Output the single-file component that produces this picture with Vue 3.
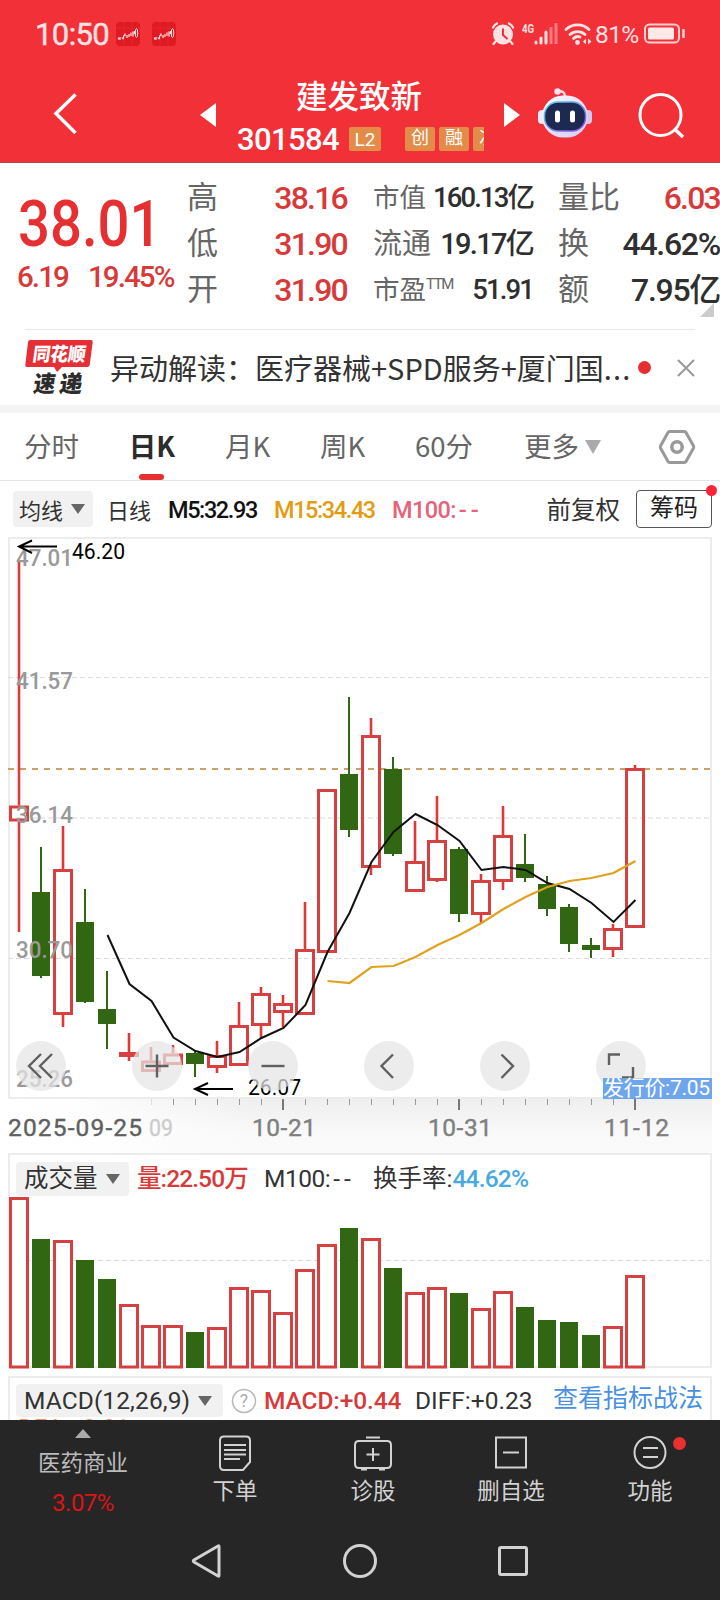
<template>
  <div class="page">
    <header class="head">
      <div class="status">
        <span class="clock">10:50</span>
        <svg v-for="n in 2" :key="n" class="app-ico" width="24" height="24" viewBox="0 0 24 24">
          <rect width="24" height="24" rx="4" fill="#e01a22" />
          <path d="M0 6h24M8 0v24M16 0v24" stroke="#e62e38" stroke-width=".6" />
          <path d="M2.500 15.500v2M4 15v3M6 15.500q1.500 3 1.500 0t1.500-2v-2M11 13v3M13 12v3M15 10.500v3.500M17 9.500v5M18.500 9v3" stroke="#ffe6e6" stroke-width="1.200" fill="none" />
          <ellipse cx="20.500" cy="11" rx="1.200" ry="4.500" stroke="#ffe6e6" fill="none" />
        </svg>
        <div class="status-right">
          <svg width="24" height="24" viewBox="0 0 24 24">
            <circle cx="12" cy="12.500" r="10" fill="#ffe3e4" />
            <path d="M2 5.500Q3 3 6 1.500M22 5.500Q21 3 18 1.500M4.500 19.500l-2 2.500M19.500 19.500l2 2.500" stroke="#ffe3e4" stroke-width="2.200" fill="none" stroke-linecap="round" />
            <path d="M12 6.500v6.500l4.500 4" stroke="#f23038" stroke-width="2" fill="none" />
          </svg>
          <svg class="signal" width="36" height="24" viewBox="0 0 36 24">
            <text x="0" y="10.500" textLength="12" lengthAdjust="spacingAndGlyphs" font-size="13.500" font-weight="700" fill="#ffe3e4">4G</text>
            <path d="M14 20v1M19 16v5M24 10v11" stroke="#ffe3e4" stroke-width="3" stroke-linecap="round" />
            <path d="M29 5v17M34 1v21" stroke="#f97a80" stroke-width="3" />
          </svg>
          <svg class="wifi" width="28" height="24" viewBox="0 0 28 24">
            <path d="M2 7.500a16.500 16.500 0 0 1 23 0M6 12.500a11 11 0 0 1 15 0M9.500 16.500a6 6 0 0 1 6.500-1.500" stroke="#ffe3e4" stroke-width="2.800" fill="none" stroke-linecap="round" />
            <circle cx="13.500" cy="20.500" r="2.400" fill="#ffe3e4" />
            <path d="M22 16.500v6l-3-3zM24 16.500v6l3.500-3z" fill="#ffe3e4" />
          </svg>
          <span class="percent">81%</span>
          <svg width="42" height="22" viewBox="0 0 42 22">
            <rect x="1" y="1.500" width="34" height="18" rx="4.500" fill="none" stroke="#ffd0d2" stroke-width="2" />
            <rect x="4" y="4.500" width="26" height="12" rx="1.500" fill="#ffe8e8" />
            <path d="M39.500 6v9" stroke="#ffd0d2" stroke-width="2.500" />
          </svg>
        </div>
      </div>
      <div class="title-bar">
        <svg class="back" width="24" height="42" viewBox="0 0 24 42">
          <path d="M22.500 1.500L3 20.500l19.500 19.500" fill="none" stroke="#fff" stroke-width="3.500" />
        </svg>
        <svg class="prev" width="16" height="24" viewBox="0 0 16 24"><path d="M16 0v24L0 12z" fill="#fff" /></svg>
        <div class="stock">
          <div class="name">建发致新</div>
          <div class="code-row">
            <span class="code">301584</span>
            <span class="tag l2">L2</span>
            <div class="tags">
              <span class="tag">创</span><span class="tag">融</span><span class="tag">次</span>
            </div>
          </div>
        </div>
        <svg class="next" width="16" height="24" viewBox="0 0 16 24"><path d="M0 0v24l16-12z" fill="#fff" /></svg>
        <svg class="robot" width="54" height="52" viewBox="0 0 54 52">
          <defs>
            <linearGradient id="shell" x1="0" y1="0" x2="1" y2="1">
              <stop offset="0" stop-color="#fff" /><stop offset=".6" stop-color="#e3dcf8" /><stop offset="1" stop-color="#d5cdf0" />
            </linearGradient>
            <linearGradient id="rim" x1="0" y1="0" x2="1" y2="1">
              <stop offset="0" stop-color="#50d8e8" /><stop offset="1" stop-color="#8b46e0" />
            </linearGradient>
          </defs>
          <path d="M20 4.500q7-1 7 5" fill="none" stroke="#ecd9ee" stroke-width="2.500" />
          <circle cx="19.500" cy="4.500" r="3.200" fill="#f6e4f2" />
          <rect x="0" y="23" width="8" height="14" rx="4" fill="#eceafa" />
          <rect x="46" y="23" width="8" height="14" rx="4" fill="#d3c8f3" />
          <rect x="4" y="8.500" width="46" height="42" rx="21" fill="url(#shell)" />
          <rect x="6.500" y="15" width="41" height="29" rx="13.500" fill="#1c2950" stroke="url(#rim)" stroke-width="1.500" />
          <rect x="17" y="23.500" width="5" height="12" rx="2.500" fill="#fff" />
          <rect x="32" y="23.500" width="5" height="12" rx="2.500" fill="#fff" />
        </svg>
        <svg class="search" width="46" height="46" viewBox="0 0 46 46">
          <circle cx="22.500" cy="22" r="20.500" fill="none" stroke="#fff" stroke-width="3" />
          <path d="M36 35.500l9 8.500" stroke="#fff" stroke-width="3.500" />
        </svg>
      </div>
    </header>

    <section class="quote">
      <div class="price">
        <div class="now">38.01</div>
        <div class="change"><span>6.19</span><span>19.45%</span></div>
      </div>
      <div v-for="(col, i) in quotes" :key="i" class="col" :class="'col' + i">
        <div v-for="q in col" :key="q.label" class="cell">
          <span class="label" :class="{ tight: q.tight }">{{ q.label }}<sup v-if="q.sup">{{ q.sup }}</sup></span>
          <span class="val" :class="{ up: q.up, small: q.tight }">{{ q.value }}</span>
        </div>
      </div>
      <i class="fold"></i>
    </section>

    <section class="notice">
      <svg width="68" height="58" viewBox="0 0 68 58">
        <path d="M5 1h61q2 0 1.700 2l-3 23q-.3 2-2.500 2H37l-5 5-3-5H2q-2 0-1.700-2L3 3q.3-2 2-2z" fill="#e62f35" />
        <g transform="skewX(-8)" font-weight="900">
          <text x="10" y="22" textLength="53" lengthAdjust="spacingAndGlyphs" font-size="19" fill="#fff">同花顺</text>
          <text x="15" y="53" textLength="22" lengthAdjust="spacingAndGlyphs" font-size="23" fill="#2c2c2c">速</text>
          <text x="41" y="53" textLength="23" lengthAdjust="spacingAndGlyphs" font-size="23" fill="#2c2c2c">递</text>
        </g>
      </svg>
      <span class="msg">异动解读：医疗器械+SPD服务+厦门国<span class="more">...</span></span>
      <i class="dot"></i>
      <svg class="close" width="18" height="18" viewBox="0 0 18 18"><path d="M1 1l16 16M17 1L1 17" stroke="#999" stroke-width="2" /></svg>
    </section>

    <nav class="tabs">
      <span v-for="t in tabs" :key="t" :class="{ on: t === '日K' }">{{ t }}</span>
      <i class="tri big"></i>
      <svg class="hex" width="38" height="36" viewBox="0 0 38 36">
        <path d="M11.500 2.500h15q1 0 1.500 1L35.500 17q.5 1 0 2L28 32.500q-.5 1-1.500 1h-15q-1 0-1.500-1L2.500 19q-.5-1 0-2L10 3.500q.5-1 1.500-1z" fill="none" stroke="#999" stroke-width="3" />
        <circle cx="19" cy="18" r="5.200" fill="none" stroke="#999" stroke-width="3.500" />
      </svg>
    </nav>

    <div class="ma-row">
      <span class="chip">均线<i class="tri"></i></span>
      <span class="period">日线</span>
      <span class="m5">M5:32.93</span>
      <span class="m15">M15:34.43</span>
      <span class="m100">M100:<span class="dash">--</span></span>
      <span class="fq">前复权</span>
      <span class="chouma">筹码</span>
    </div>

    <div class="kline">
      <svg width="720" height="617" viewBox="0 536 720 617">
        <defs>
          <linearGradient id="axisV" x1="0" y1="0" x2="0" y2="1">
            <stop offset="0" stop-color="#eeeeee" /><stop offset=".6" stop-color="#f9f9f9" /><stop offset="1" stop-color="#fafafa" />
          </linearGradient>
          <linearGradient id="axisH" x1="0" y1="0" x2="1" y2="0">
            <stop offset="0" stop-color="#fff" /><stop offset=".3" stop-color="#fff" stop-opacity=".9" /><stop offset="1" stop-color="#fff" stop-opacity="0" />
          </linearGradient>
        </defs>
        <rect x="9" y="538" width="702" height="560" fill="#fff" stroke="#ececec" stroke-width="2" />
        <path d="M8 677.500H710M8 958.500H710" stroke="#dcdcdc" stroke-dasharray="5 3" />
        <path d="M8 818H710" stroke="#ebebeb" stroke-width="2" stroke-dasharray="5 3" />
        <path d="M8 769H710" stroke="#c8a26b" stroke-width="2" stroke-dasharray="6 6" />
        <g v-for="(c, i) in candles" :key="i">
          <template v-if="c[0]">
            <path :d="`M${cx(i)} ${c[1]}V${c[2]}M${cx(i)} ${c[3]}V${c[4]}`" stroke="#de3838" stroke-width="2.600" />
            <rect :x="cx(i) - 8.5" :y="c[2] + 1.5" width="17" :height="c[3] - c[2] - 3" fill="none" stroke="#d64040" stroke-width="3" />
          </template>
          <template v-else>
            <path :d="`M${cx(i)} ${c[1]}V${c[4]}`" stroke="#316613" stroke-width="2" />
            <rect :x="cx(i) - 9" :y="c[2]" width="18" :height="c[3] - c[2]" fill="#316613" />
          </template>
        </g>
        <polyline :points="line(ma5, 4)" fill="none" stroke="#111" stroke-width="2" />
        <polyline :points="line(ma15, 14)" fill="none" stroke="#dea220" stroke-width="2.200" />
        <g font-size="24.500" font-weight="500" fill="#999">
          <text v-for="s in scale" :key="s[0]" x="16" :y="s[1]" textLength="57" lengthAdjust="spacingAndGlyphs">{{ s[0] }}</text>
        </g>
        <g fill="none" stroke="#000" stroke-width="2">
          <path d="M57 546.500H19M32 540.500L19 546.500L32 553" />
          <path d="M233 1089H195M208 1083L195 1089L208 1095" />
        </g>
        <g font-size="22" fill="#000">
          <text x="72" y="558.500" textLength="53" lengthAdjust="spacingAndGlyphs">46.20</text>
          <text x="248" y="1095" textLength="53" lengthAdjust="spacingAndGlyphs">26.07</text>
        </g>
        <!-- 日期轴 -->
        <rect x="8" y="1099" width="704" height="54" fill="url(#axisV)" />
        <rect x="8" y="1099" width="250" height="54" fill="url(#axisH)" />
        <path d="M151.500 1099v6" stroke="#ddd" />
        <path v-for="i in 22" :key="i" :d="`M${cx(i + 6) + 0.5} 1099v6`" stroke="#999" stroke-width="1" />
        <path d="M283 1099v11M459 1099v11M635 1099v11" stroke="#777" stroke-width="2" />
        <g font-size="24.500" fill="#808080" stroke="#808080" stroke-width=".4">
          <text x="8" y="1135.500" textLength="134" fill="#606060" stroke="#606060">2025-09-25</text>
          <text x="149" y="1135.500" textLength="24" lengthAdjust="spacingAndGlyphs" fill="#ccc" stroke="#ccc">09</text>
          <text x="252" y="1135.500" textLength="64">10-21</text>
          <text x="428" y="1135.500" textLength="64">10-31</text>
          <text x="604" y="1135.500" textLength="65">11-12</text>
        </g>
      </svg>
      <div class="tools">
        <svg v-for="(d, i) in tools" :key="i" width="50" height="50" viewBox="0 0 50 50">
          <circle cx="25" cy="25" r="25" fill="#e4e4e4" fill-opacity=".72" />
          <path :d="d" fill="none" stroke="#606060" stroke-width="2.400" />
        </svg>
      </div>
      <span class="issue">发行价:7.05</span>
    </div>

    <section class="panel volume">
      <div class="panel-head">
        <span class="chip">成交量<i class="tri"></i></span>
        <span class="vol-num">量:22.50万</span>
        <span class="vol-m">M100:<span class="dash">--</span></span>
        <span class="turn">换手率:<b>44.62%</b></span>
      </div>
      <svg class="bars" width="700" height="171" viewBox="10 1196 700 171">
        <path d="M10 1260.500H709" stroke="#dcdcdc" stroke-dasharray="5 3" />
        <template v-for="(v, i) in volumes" :key="i">
          <rect v-if="candles[i][0]" :x="cx(i) - 8.5" :y="v + 1.5" width="17" :height="1366.5 - v - 1" fill="#fff" stroke="#d64040" stroke-width="3" />
          <rect v-else :x="cx(i) - 9" :y="v" width="18" :height="1368 - v" fill="#316613" />
        </template>
      </svg>
    </section>

    <section class="panel macd">
      <div class="panel-head">
        <span class="chip">MACD(12,26,9)<i class="tri"></i></span>
        <svg class="help" width="26" height="26" viewBox="0 0 26 26">
          <circle cx="13" cy="13" r="11.500" fill="none" stroke="#bbb" stroke-width="1.600" />
          <text x="13" y="19" text-anchor="middle" font-size="17.500" fill="#aaa">?</text>
        </svg>
        <span class="macd-num">MACD:+0.44</span>
        <span class="diff">DIFF:+0.23</span>
        <span class="link">查看指标战法</span>
      </div>
      <div class="dea">DEA:+0.01</div>
    </section>

    <footer class="bottom">
      <div class="menu">
        <div class="item sector">
          <i class="up-tri"></i>
          <span class="sector-name">医药商业</span>
          <span class="sector-pct">3.07%</span>
        </div>
        <div class="item">
          <svg width="34" height="36" viewBox="0 0 34 36">
            <path d="M6 1.500h22q4 0 4 4V27l-7 8H6q-4 0-4-4V5.500q0-4 4-4z" />
            <path d="M6 10h22M6 15h22M6 19.500h22M6 24h16" />
          </svg>
          <span>下单</span>
        </div>
        <div class="item">
          <svg width="38" height="36" viewBox="0 0 38 36">
            <path d="M12 2.500h14M5 6h28q4 0 4 4v19q0 4-4 4H5q-4 0-4-4V10q0-4 4-4zM19 13v13M12.500 19.500h13" />
            <path d="M7 34.500h6M25 34.500h6" />
          </svg>
          <span>诊股</span>
        </div>
        <div class="item">
          <svg width="34" height="36" viewBox="0 0 34 36">
            <path d="M2 2.500h30v30H2zM9 17.500h16" />
          </svg>
          <span>删自选</span>
        </div>
        <div class="item">
          <svg width="34" height="36" viewBox="0 0 34 36">
            <circle cx="17" cy="17.500" r="15.500" />
            <path d="M10 13h15M10 22h15" />
          </svg>
          <span>功能</span>
          <i class="badge"></i>
        </div>
      </div>
      <div class="sys">
        <svg width="32" height="36" viewBox="0 0 32 36"><path d="M28 3.500v29q0 1-1 .5L3 19q-1.500-1 0-2L27 3q1-.5 1 .5z" /></svg>
        <svg width="36" height="36" viewBox="0 0 36 36"><circle cx="18" cy="18" r="15.500" /></svg>
        <svg width="32" height="36" viewBox="0 0 32 36"><rect x="2.500" y="4.500" width="27" height="27" rx="1.500" /></svg>
      </div>
    </footer>
  </div>
</template>

<script setup>
const quotes = [
  [
    { label: "高", value: "38.16", up: true },
    { label: "低", value: "31.90", up: true },
    { label: "开", value: "31.90", up: true },
  ],
  [
    { label: "市值", value: "160.13亿", tight: true },
    { label: "流通", value: "19.17亿" },
    { label: "市盈", sup: "TTM", value: "51.91", tight: true },
  ],
  [
    { label: "量比", value: "6.03", up: true },
    { label: "换", value: "44.62%" },
    { label: "额", value: "7.95亿" },
  ],
];
const tabs = ["分时", "日K", "月K", "周K", "60分", "更多"];

// [是否上涨, 最高, 实体上沿, 实体下沿, 最低]
const candles = [
  [1, 562, 805.5, 821.5, 932],
  [0, 847, 892, 976, 978],
  [1, 826, 869, 1015, 1027],
  [0, 889, 922, 1002, 1003],
  [0, 971, 1009, 1024, 1049],
  [1, 1033, 1052, 1057, 1061],
  [1, 1047, 1060.5, 1072, 1072],
  [1, 1045, 1053.5, 1065, 1065],
  [0, 1050, 1053, 1064, 1077],
  [1, 1041, 1055, 1068, 1073],
  [1, 1002, 1025, 1066, 1066],
  [1, 987, 993, 1026, 1038],
  [1, 995, 1003, 1013, 1027],
  [1, 902, 949, 1015, 1015],
  [1, 789, 789, 953, 953],
  [0, 697, 774, 830, 837],
  [1, 718, 735, 868, 875],
  [0, 757, 769, 854, 856],
  [1, 821, 861, 892, 892],
  [1, 796, 840, 881, 882],
  [0, 847, 849, 914, 922],
  [1, 874, 880, 915, 923],
  [1, 806, 835, 882, 890],
  [0, 834, 864, 878, 882],
  [0, 876, 884, 909, 916],
  [0, 904, 907, 944, 952],
  [0, 938, 945, 950, 958],
  [1, 924, 928, 950, 957],
  [1, 765, 768, 928, 928],
];
const ma5 = [
  935, 984, 1001, 1037.5, 1051, 1057, 1052, 1038, 1028, 1005, 952, 913, 862,
  832, 814, 825, 841, 870, 867, 870, 883, 889, 903, 922, 900,
];
const ma15 = [
  981, 983, 967, 966, 957, 945, 935, 923, 909, 897, 887, 881, 878, 873, 861,
];
const volumes = [
  1197, 1239, 1240, 1260, 1279, 1304, 1325, 1325, 1332, 1327, 1287, 1290, 1312,
  1269, 1244, 1228, 1238, 1268, 1292, 1287, 1293, 1308, 1291, 1307, 1320, 1322,
  1335, 1326, 1275,
];
const scale = [
  ["47.01", 566],
  ["41.57", 689],
  ["36.14", 823],
  ["30.70", 958],
  ["25.26", 1087],
];
const tools = [
  "M25 13L13 25l12 12M36 13L24 25l12 12",
  "M25 13.500v23M13.500 25h23",
  "M13.500 25h23",
  "M29 13.500L17.500 25L29 37",
  "M21.500 13.500L33 25L21.500 37",
  "M13 24V13.500h11M37 26v10.500H26",
];

const cx = (i) => 19 + 22 * i;
const line = (arr, from) =>
  arr.map((y, i) => `${cx(i + from) + 0.5},${y}`).join(" ");
</script>

<style>
body {
  background: #fff;
}
</style>

<style scoped>
.page {
  width: 720px;
  height: 1600px;
  overflow: hidden;
  background: #fff;
  color: #333;
  font-family: Roboto, "Noto Sans CJK SC", sans-serif;
  display: flex;
  flex-direction: column;
}
.page > * {
  flex: none;
  box-sizing: border-box;
}
svg {
  display: block;
  flex: none;
}
.head {
  height: 163px;
  background: #f23038;
  border-bottom: 1px solid #b9484e;
  color: #fff;
}
.status {
  height: 68px;
  display: flex;
  align-items: center;
  padding: 0 34px 0 35px;
}
.clock {
  font-size: 31px;
  letter-spacing: -0.6px;
  color: #ffe3e4;
  -webkit-text-stroke: 0.4px #ffe3e4;
  margin-right: 5px;
  width: 76px;
}
.app-ico {
  margin-right: 12px;
}
.status-right {
  margin-left: auto;
  display: flex;
  align-items: center;
}
.signal {
  margin-left: 7px;
}
.wifi {
  margin-left: 6px;
}
.percent {
  font-size: 24.5px;
  color: #ffe3e4;
  letter-spacing: -0.6px;
  width: 45px;
  margin: 0 4px 0 3px;
}
.title-bar {
  height: 94px;
  display: flex;
  align-items: flex-start;
}
.back {
  margin: 25px 0 0 53px;
}
.prev {
  margin: 35px 0 0 123px;
}
.stock {
  width: 268px;
  margin: 11px 0 0 20px;
}
.name {
  font-size: 31.5px;
  line-height: 38px;
  font-weight: 500;
  padding-left: 60px;
}
.code-row {
  height: 32px;
  margin-top: 6px;
  display: flex;
  align-items: center;
}
.code {
  font-size: 31px;
  font-weight: 500;
  line-height: 32px;
  letter-spacing: -0.6px;
  width: 113px;
  padding-top: 1px;
  box-sizing: border-box;
  text-indent: 1px;
}
.tag {
  flex: none;
  width: 30px;
  height: 24px;
  line-height: 22px;
  font-size: 18px;
  text-align: center;
  background: #e38b49;
  border-radius: 2px;
}
.l2 {
  width: 32px;
  line-height: 25px;
  font-size: 19px;
}
.tags {
  display: flex;
  gap: 4px;
  width: 79px;
  overflow: hidden;
  margin-left: 24px;
}
.next {
  margin: 35px 0 0;
}
.robot {
  margin: 19px 0 0 18px;
}
.search {
  margin: 25px 0 0 46px;
}

.quote {
  height: 166px;
  display: flex;
  padding-top: 12px;
  position: relative;
}
.price {
  width: 187px;
  color: #e62f30;
}
.now {
  font-size: 65px;
  line-height: 72px;
  font-weight: 500;
  margin: 13px 0 0 18px;
  transform: scaleX(0.865);
  transform-origin: left;
}
.change {
  display: flex;
  gap: 20px;
  font-size: 29.5px;
  line-height: 34px;
  margin: 0 0 0 17px;
  letter-spacing: -1.9px;
  color: #d83a3a;
  font-weight: 500;
}
.cell {
  height: 46px;
  display: flex;
  align-items: center;
  justify-content: space-between;
  white-space: nowrap;
}
.label {
  font-size: 31px;
  color: #666;
  line-height: 46px;
}
.val {
  font-size: 32px;
  font-weight: 500;
  letter-spacing: -1.8px;
  color: #2f2f2f;
  line-height: 46px;
}
.val.up {
  color: #d83a3a;
}
.col0 {
  width: 160px;
}
.col1 {
  width: 160px;
  margin-left: 26px;
}
.col1 .label {
  font-size: 29px;
}
.col1 .label.tight {
  font-size: 26.5px;
}
.col1 .val {
  font-size: 29px;
  letter-spacing: -1.7px;
}
.col1 .val.small {
  font-size: 27.5px;
  letter-spacing: -1.9px;
}
.col1 sup {
  font-size: 15px;
  line-height: 0;
  letter-spacing: -1.4px;
}
.col2 {
  width: 162px;
  margin-left: 25px;
}
.col2 .val:not(.up) {
  letter-spacing: -1.3px;
}
.fold {
  position: absolute;
  right: 6px;
  bottom: 12px;
  border-left: 14px solid transparent;
  border-bottom: 14px solid #ccc;
}

.notice {
  height: 76px;
  margin: 0 25px;
  border-top: 1px solid #e9e9e9;
  display: flex;
  align-items: center;
}
.msg {
  width: 524px;
  margin: -1px 0 0 17px;
  font-family: "Noto Sans CJK SC", sans-serif;
  font-size: 29px;
  line-height: 40px;
  white-space: nowrap;
}
.more {
  letter-spacing: 1.2px;
}
.dot {
  width: 13px;
  height: 13px;
  border-radius: 50%;
  background: #e62f30;
  margin: -1px 0 0 6px;
}
.close {
  margin-left: 26px;
}

.tabs {
  height: 76px;
  border-top: 8px solid #f4f4f4;
  border-bottom: 1px solid #e4e4e4;
  display: flex;
  align-items: center;
  padding-left: 24px;
  font-size: 27.5px;
  color: #666;
  font-family: "Noto Sans CJK SC", sans-serif;
}
.tabs span {
  line-height: 65px;
  height: 67px;
  margin-right: 49.8px;
  position: relative;
}
.tabs span:nth-child(6) {
  margin: 0 6px 0 1px;
}
.tabs .on {
  color: #2c2c2c;
  font-weight: 700;
}
.tabs .on::after {
  content: "";
  position: absolute;
  left: 10px;
  bottom: 0;
  width: 25px;
  height: 6px;
  border-radius: 3px;
  background: #e62f30;
}
.tri {
  display: inline-block;
  border: 6.5px solid transparent;
  border-top: 9px solid #666;
  border-bottom: 0;
}
.tri.big {
  border-width: 14px 8.5px 0;
  border-top-color: #aaa;
}
.hex {
  margin-left: auto;
  margin-right: 24px;
}

.ma-row {
  height: 55px;
  display: flex;
  align-items: center;
  padding: 0 8px 0 13px;
  font-size: 22px;
  white-space: nowrap;
}
.chip {
  display: flex;
  align-items: center;
  box-sizing: border-box;
  background: #f1f1f1;
  border-radius: 4px;
  white-space: nowrap;
}
.ma-row .chip {
  width: 80px;
  height: 36px;
  padding-left: 6px;
}
.chip .tri {
  margin-left: 8px;
  border-width: 10px 7px 0;
}
.period {
  margin-left: 14px;
  width: 61px;
}
.m5,
.m15,
.m100 {
  font-size: 23.5px;
  font-weight: 500;
  letter-spacing: -1.4px;
  color: #111;
  width: 106px;
  padding-top: 3px;
}
.m15 {
  color: #e39b12;
  width: 118px;
}
.m100 {
  color: #e5637a;
  letter-spacing: -0.6px;
}
.dash {
  letter-spacing: 4px;
  margin-left: 3px;
}
.fq {
  margin-left: auto;
  font-size: 24.5px;
}
.chouma {
  margin-left: 16px;
  width: 76px;
  height: 38px;
  line-height: 35px;
  font-size: 24px;
  text-align: center;
  box-sizing: border-box;
  border: 1px solid #555;
  border-radius: 4px;
  position: relative;
  color: #222;
}
.chouma::after {
  content: "";
  position: absolute;
  right: -6px;
  top: -6px;
  width: 11px;
  height: 11px;
  border-radius: 50%;
  background: #fa2538;
}

.kline {
  height: 617px;
  position: relative;
}
.tools {
  position: absolute;
  left: 16px;
  top: 505px;
  display: flex;
  gap: 66px;
}
.issue {
  position: absolute;
  right: 8px;
  top: 542px;
  width: 109px;
  height: 21px;
  line-height: 21px;
  font-size: 21px;
  letter-spacing: -0.3px;
  color: #fff;
  background: #6ea6ed;
  white-space: nowrap;
}

.panel {
  margin: 0 8px;
  border: 2px solid #ececec;
}
.panel-head {
  display: flex;
  align-items: center;
  padding-left: 6px;
  font-size: 24.5px;
  white-space: nowrap;
}
.volume {
  height: 215px;
}
.volume .panel-head {
  height: 41px;
  line-height: 34px;
}
.volume .chip {
  width: 113px;
  height: 34px;
  padding-left: 8px;
  margin-top: 6px;
}
.volume .panel-head > span:not(.chip) {
  margin-top: 6px;
}
.vol-num {
  margin-left: 8px;
  width: 127px;
  color: #d83a3a;
  font-weight: 500;
  letter-spacing: -0.9px;
}
.vol-m {
  width: 109px;
  letter-spacing: -0.5px;
}
.turn b {
  font-weight: 500;
  color: #48aae2;
  letter-spacing: -0.8px;
}
.bars {
  overflow: visible;
}
.macd {
  height: 44px;
  margin-top: 8px;
  border-bottom: 0;
  overflow: hidden;
}
.macd .panel-head {
  height: 33px;
  margin-top: 6px;
}
.macd .chip {
  width: 207px;
  height: 33px;
  padding-left: 8px;
  letter-spacing: 0.1px;
}
.help {
  margin-left: 8px;
}
.macd-num {
  margin-left: 7px;
  width: 151px;
  color: #d83a3a;
  font-weight: 500;
  letter-spacing: -0.1px;
}
.diff {
  width: 138px;
}
.link {
  color: #4a90e2;
  font-size: 25px;
  line-height: 30px;
  margin-top: -3px;
}
.dea {
  margin: -1px 0 0 8px;
  font-size: 24px;
  line-height: 24px;
  color: #f09060;
}

.bottom {
  height: 180px;
  background: #262626;
  color: #d2d2d2;
}
.bottom svg {
  fill: none;
  stroke: #d2d2d2;
  stroke-width: 2;
}
.menu {
  display: flex;
  height: 116px;
}
.item {
  width: 138px;
  display: flex;
  flex-direction: column;
  align-items: center;
  padding-top: 15px;
  font-size: 22.5px;
  line-height: 32px;
  position: relative;
  box-sizing: border-box;
}
.item > span {
  margin-top: 4px;
}
.item.sector {
  width: 166px;
  padding-top: 9px;
  color: #bbb;
}
.up-tri {
  border: 8.5px solid transparent;
  border-bottom: 9px solid #aaa;
  border-top: 0;
}
.item .sector-name {
  margin-top: 9px;
}
.item .sector-pct {
  margin-top: 8px;
  color: #dc1414;
  font-size: 24px;
  letter-spacing: -0.5px;
}
.item:last-child {
  width: 140px;
}
.badge {
  position: absolute;
  right: 34px;
  top: 17px;
  width: 13px;
  height: 13px;
  border-radius: 50%;
  background: #e93030;
}
.sys {
  display: flex;
  gap: 119px;
  padding: 7px 0 0 191px;
}
.bottom .sys svg {
  stroke-width: 3;
}
</style>
